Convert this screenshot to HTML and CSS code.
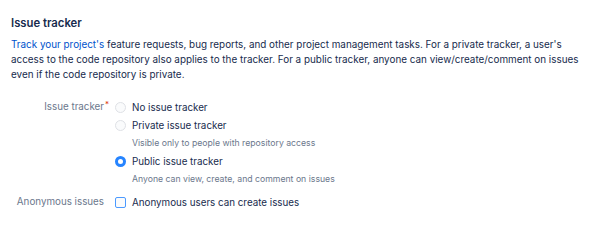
FILE: index.html
```html
<!DOCTYPE html>
<html>
<head>
<meta charset="utf-8">
<link rel="stylesheet" href="styles.css">
</head>
<body>
<section class="panel">
  <h2 class="title">Issue tracker</h2>
  <p class="intro"><a class="link" href="#">Track your project's</a> feature requests, bug reports, and other project management tasks. For a private tracker, a user's access to the code repository also applies to the tracker. For a public tracker, anyone can view/create/comment on issues even if the code repository is private.</p>
  <div class="form">
    <div class="field">
      <div class="label">Issue tracker<span class="req">*</span></div>
      <div class="controls">
        <label class="option"><span class="radio"></span><span>No issue tracker</span></label>
        <label class="option"><span class="radio"></span><span>Private issue tracker</span></label>
        <div class="desc">Visible only to people with repository access</div>
        <label class="option"><span class="radio checked"></span><span>Public issue tracker</span></label>
        <div class="desc">Anyone can view, create, and comment on issues</div>
      </div>
    </div>
    <div class="field">
      <div class="label">Anonymous issues</div>
      <div class="controls">
        <label class="option"><span class="checkbox"></span><span>Anonymous users can create issues</span></label>
      </div>
    </div>
  </div>
</section>
</body>
</html>
```

FILE: styles.css
```css
html, body {
  margin: 0;
  padding: 0;
  background: #ffffff;
}
body {
  font-family: Inter, "Noto Sans", "Liberation Sans", sans-serif;
  color: #172b4d;
  font-size: 9.9px;
}
.panel {
  padding: 15px 11px 0 11px;
}
.title {
  margin: 0;
  font-size: 11.3px;
  font-weight: 600;
  line-height: 16px;
  color: #172b4d;
}
.intro {
  margin: 6px 0 0 0;
  font-size: 9.9px;
  line-height: 15px;
}
.link {
  color: #0052cc;
  text-decoration: none;
}
.form {
  margin-top: 16px;
  display: flex;
  flex-direction: column;
  gap: 5px;
}
.field {
  display: grid;
  grid-template-columns: 93px 1fr;
  column-gap: 11px;
}
.label {
  text-align: right;
  color: #6b778c;
  height: 18px;
  line-height: 18px;
  font-size: 9.8px;
  white-space: nowrap;
  position: relative;
}
.req {
  color: #de350b;
  position: absolute;
  font-size: 8px;
  line-height: 8px;
  top: 2px;
  right: -5px;
}
.controls {
  display: flex;
  flex-direction: column;
}
.option {
  display: flex;
  align-items: center;
  gap: 6px;
  height: 18px;
  font-size: 9.8px;
  color: #172b4d;
}
.radio {
  box-sizing: border-box;
  width: 11px;
  height: 11px;
  border-radius: 50%;
  border: 1px solid #dfe1e6;
  background: #fafbfc;
  flex: none;
}
.radio.checked {
  border: 3.5px solid #2684ff;
  background: #ffffff;
}
.checkbox {
  box-sizing: border-box;
  width: 11px;
  height: 11px;
  border-radius: 2px;
  border: 1.5px solid #4c9aff;
  background: #fafbfc;
  flex: none;
}
.desc {
  margin-left: 17px;
  height: 18px;
  line-height: 18px;
  font-size: 8.7px;
  color: #6b778c;
}
```
